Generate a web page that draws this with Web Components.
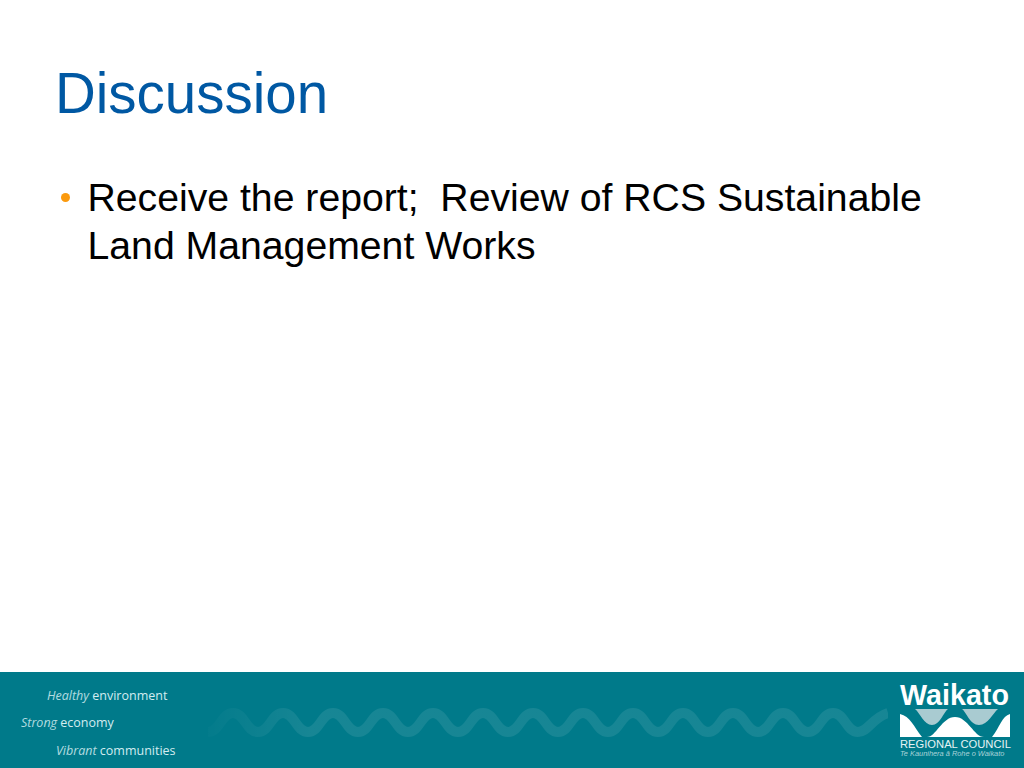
<!DOCTYPE html>
<html><head><meta charset="utf-8"><style>html,body{margin:0;padding:0;background:#fff}body{width:1024px;height:768px;overflow:hidden;display:flex;flex-direction:column;font-family:"Liberation Sans",Arial,sans-serif}</style></head><body>
<slide-body style="flex:1"><slide-title>Discussion</slide-title><bullet-item>Receive the report;&nbsp; Review of RCS Sustainable Land Management Works</bullet-item></slide-body>
<slide-footer></slide-footer>
<script>
function def(n,h){customElements.define(n,class extends HTMLElement{constructor(){super();this.attachShadow({mode:'open'}).innerHTML=h}})}
def('slide-body','<style>:host{display:block;padding:62px 96px 0 55px}</style><slot></slot>');
def('slide-title','<style>:host{display:block;font-size:56.5px;line-height:64px;color:#0058a3;margin-bottom:48px}</style><slot></slot>');
def('bullet-item','<style>:host{display:flex;font-size:39.2px;line-height:48px;color:#000}i{flex:none;width:9px;height:9px;border-radius:50%;background:#fb9a0e;margin:19px 17.5px 0 6px}</style><i></i><div><slot></slot></div>');
const wave='M18 30'+'c12 0 13 -19 25 -19s13 19 25 19'.repeat(13)+'c10 0 14 -14 30 -19';
def('slide-footer',`<style>:host{display:flex;height:96px;background:#007a8a;position:relative;font-family:"Open Sans",sans-serif;color:#d3ecf0}
.t{width:190px;flex:none;display:flex;flex-direction:column;font-size:12.5px;line-height:27.5px;padding-top:10px;box-sizing:border-box}.t span:nth-child(2){margin-top:-1px;margin-bottom:1px}.t em{font-style:italic;opacity:.85}
.w{flex:none;width:698px;padding-top:30px;box-sizing:border-box}
.l{flex:1;padding:8px 0 0 12px;box-sizing:border-box;color:#fff;font-family:"Liberation Sans",sans-serif}
.n{font-weight:700;font-size:28.7px;line-height:30px}
.r{font-size:11.2px;line-height:11px;margin-top:2px;white-space:nowrap;color:#e6f3f5}.m{font-size:7.4px;line-height:9px;margin-top:-1px;font-style:italic;color:#a9d3d9;white-space:nowrap}svg{display:block}</style>
<div class="t"><span style="padding-left:47px"><em>Healthy</em> environment</span><span style="padding-left:21px"><em>Strong</em> economy</span><span style="padding-left:56px"><em>Vibrant</em> communities</span></div>
<div class="w"><svg width="698" height="40" viewBox="0 0 698 40" fill="none"><defs><linearGradient id="g" gradientUnits="userSpaceOnUse" x1="0" x2="120" y1="0" y2="0"><stop offset="0" stop-color="#fff" stop-opacity="0"/><stop offset="1" stop-color="#fff" stop-opacity=".09"/></linearGradient></defs><path stroke="url(#g)" stroke-width="10" d="${wave}"/></svg></div>
<div class="l"><div class="n">Waikato</div><svg width="112" height="28" viewBox="0 0 112 28" style="margin-top:-1px"><path fill="#fff" d="M0 5C10 7 14 18 22 28H0ZM27 28C36 28 42 8 55 8 68 8 74 28 84 28ZM92 28C100 18 102 7 110 5V28Z"/><path fill="#a9cbd1" d="M15 0H48C43 4 40 16 32 16 24 16 20 4 15 0ZM62 0H98C93 4 88 16 79 16 70 16 67 4 62 0Z"/></svg><div class="r">REGIONAL COUNCIL</div><div class="m">Te Kaunihera ā Rohe o Waikato</div></div>`);
</script></body></html>
